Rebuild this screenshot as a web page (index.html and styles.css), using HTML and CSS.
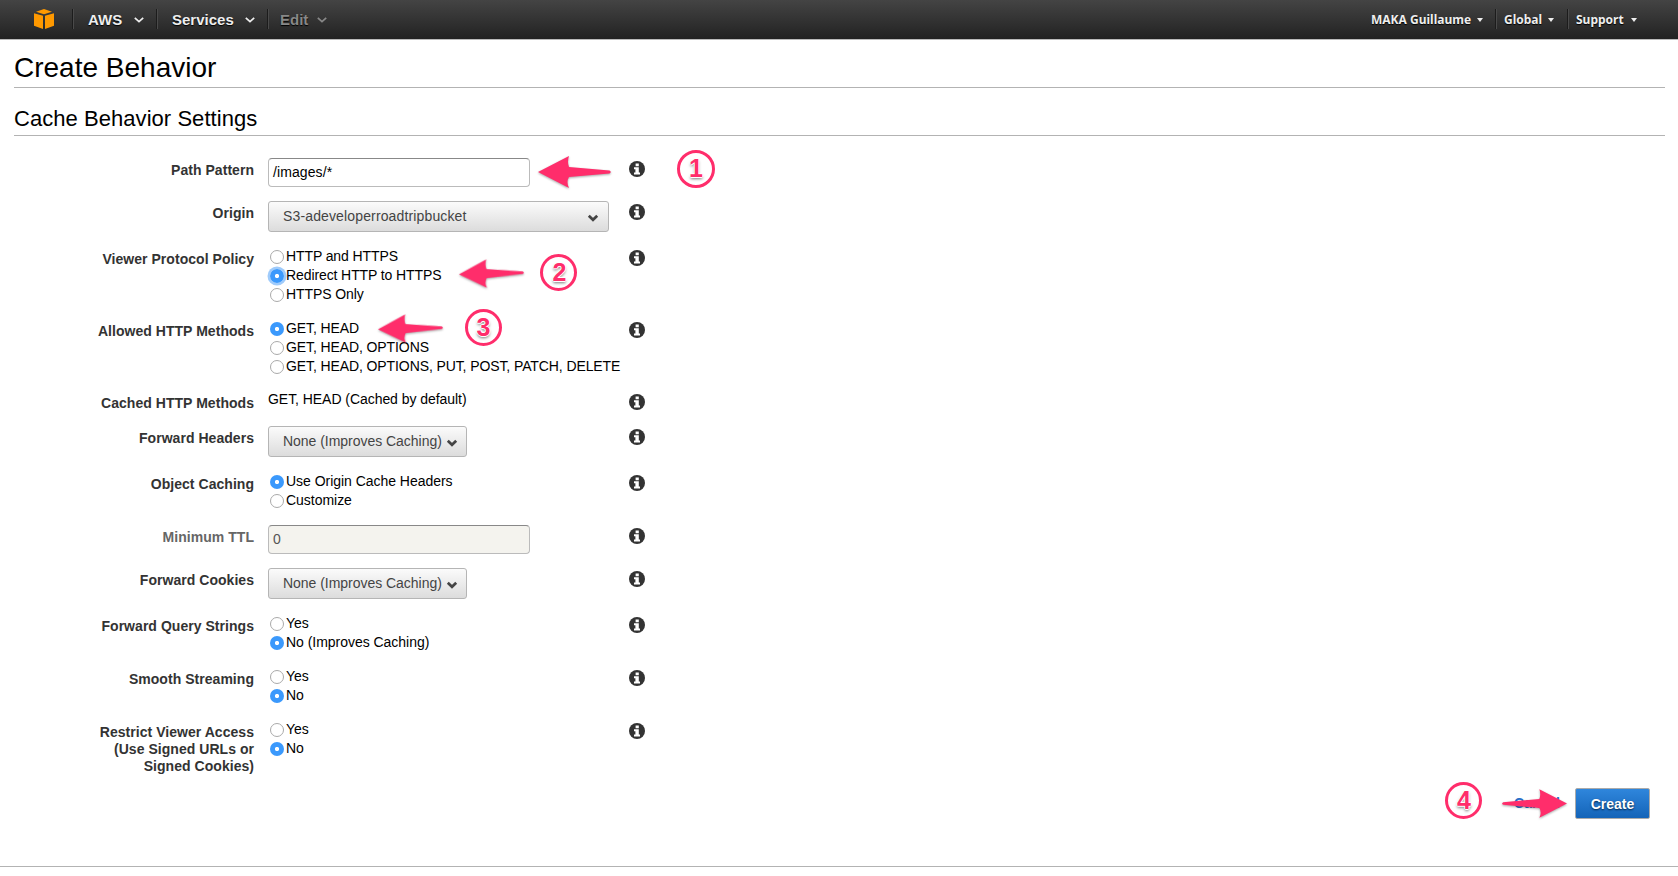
FILE: index.html
```html
<!DOCTYPE html>
<html lang="en">
<head>
<meta charset="utf-8">
<title>Create Behavior</title>
<link rel="stylesheet" href="styles.css">
</head>
<body>
<svg class="defs" width="0" height="0">
  <symbol id="info" viewBox="0 0 16 16"><circle cx="8" cy="8" r="8" fill="#333"/><path d="M6.600 2.400h3.200v2.800H6.600zM5 6.300h4.800v5.200H11v1.900H5v-1.900h1.400V8.200H5z" fill="#fff"/></symbol>
  <symbol id="chev" viewBox="0 0 12 8"><path d="M1.800 1.800 6 5.800l4.200-4" fill="none" stroke="#444" stroke-width="2.700"/></symbol>
  <symbol id="navchev" viewBox="0 0 10 6"><path d="M.8.8 5 4.700 9.200.8" fill="none" stroke="currentColor" stroke-width="1.700"/></symbol>
  <symbol id="arrow" viewBox="0 0 74 32"><path d="M0 16 31 0Q29 6 31 11L71.500 14.600Q74 16 71.500 17.500L31 21Q28 26 31 32Z" fill="#ff2d6b"/></symbol>
</svg>
<header class="nav">
  <svg class="logo" viewBox="0 0 20 20"><path d="M10 0 18 2.700 10 5.200 2 2.700zM0 4.200l9 2.600V20l-9-3.300zM20 4.200l-9 2.600V20l9-3.300z" fill="#f90"/></svg>
  <nav class="left">
    <a class="item aws"><span>AWS</span><svg><use href="#navchev"/></svg></a>
    <a class="item services"><span>Services</span><svg><use href="#navchev"/></svg></a>
    <a class="item edit"><span>Edit</span><svg><use href="#navchev"/></svg></a>
  </nav>
  <nav class="right">
    <a class="acct user"><span>MAKA Guillaume</span><i></i></a>
    <a class="acct global"><span>Global</span><i></i></a>
    <a class="acct support"><span>Support</span><i></i></a>
  </nav>
</header>
<main>
  <h1>Create Behavior</h1>
  <h2>Cache Behavior Settings</h2>
  <form class="form">
    <div class="row h43"><label>Path Pattern</label><div class="control"><div class="input">/images/*</div></div><svg class="info"><use href="#info"/></svg></div>
    <div class="row h46"><label>Origin</label><div class="control"><div class="select wide"><span class="origin">S3-adeveloperroadtripbucket</span><svg><use href="#chev"/></svg></div></div><svg class="info"><use href="#info"/></svg></div>
    <div class="row h72"><label>Viewer Protocol Policy</label><div class="control radios"><div><b></b><span>HTTP and HTTPS</span></div><div><b class="on focus"></b><span>Redirect HTTP to HTTPS</span></div><div><b></b><span>HTTPS Only</span></div></div><svg class="info"><use href="#info"/></svg></div>
    <div class="row h72"><label>Allowed HTTP Methods</label><div class="control radios"><div><b class="on"></b><span>GET, HEAD</span></div><div><b></b><span>GET, HEAD, OPTIONS</span></div><div><b></b><span>GET, HEAD, OPTIONS, PUT, POST, PATCH, DELETE</span></div></div><svg class="info"><use href="#info"/></svg></div>
    <div class="row h35"><label>Cached HTTP Methods</label><div class="control plain"><span>GET, HEAD (Cached by default)</span></div><svg class="info"><use href="#info"/></svg></div>
    <div class="row h46"><label>Forward Headers</label><div class="control"><div class="select"><span>None (Improves Caching)</span><svg><use href="#chev"/></svg></div></div><svg class="info"><use href="#info"/></svg></div>
    <div class="row h53"><label>Object Caching</label><div class="control radios"><div><b class="on"></b><span class="loose">Use Origin Cache Headers</span></div><div><b></b><span class="loose">Customize</span></div></div><svg class="info"><use href="#info"/></svg></div>
    <div class="row h43"><label class="muted">Minimum TTL</label><div class="control"><div class="input disabled">0</div></div><svg class="info"><use href="#info"/></svg></div>
    <div class="row h46"><label>Forward Cookies</label><div class="control"><div class="select"><span>None (Improves Caching)</span><svg><use href="#chev"/></svg></div></div><svg class="info"><use href="#info"/></svg></div>
    <div class="row h53"><label>Forward Query Strings</label><div class="control radios"><div><b></b><span class="loose">Yes</span></div><div><b class="on"></b><span class="loose">No (Improves Caching)</span></div></div><svg class="info"><use href="#info"/></svg></div>
    <div class="row h53"><label>Smooth Streaming</label><div class="control radios"><div><b></b><span class="loose">Yes</span></div><div><b class="on"></b><span class="loose">No</span></div></div><svg class="info"><use href="#info"/></svg></div>
    <div class="row last"><label>Restrict Viewer Access<br>(Use Signed URLs or<br>Signed Cookies)</label><div class="control radios"><div><b></b><span class="loose">Yes</span></div><div><b class="on"></b><span class="loose">No</span></div></div><svg class="info"><use href="#info"/></svg></div>
  </form>
  <div class="actions"><a class="cancel">Cancel</a><button class="create">Create</button></div>
</main>
<footer></footer>
<svg class="arrow a1"><use href="#arrow"/></svg>
<svg class="arrow a2"><use href="#arrow"/></svg>
<svg class="arrow a3"><use href="#arrow"/></svg>
<svg class="arrow a4"><use href="#arrow"/></svg>
<div class="step s1">1</div>
<div class="step s2">2</div>
<div class="step s3">3</div>
<div class="step s4">4</div>
</body>
</html>
```
FILE: styles.css
```css
* { box-sizing: border-box; }
body { margin: 0; height: 876px; overflow: hidden; position: relative; background: #fff; color: #000; font: 14px/19px "Liberation Sans", Arial, sans-serif; }
.defs { position: absolute; }
.nav { height: 40px; display: flex; align-items: flex-start; background: linear-gradient(#444, #222); border-bottom: 1px solid #bbb; color: #eee; }
.logo { width: 20px; height: 20px; margin: 9px 18px 0 34px; }
.left, .right { display: flex; margin-top: 9px; }
.right { margin-left: auto; margin-right: 40px; }
.item, .acct { display: flex; align-items: center; height: 20px; border-left: 1px solid #1c1c1c; box-shadow: inset 1px 0 #4a4a4a; font-weight: bold; text-shadow: 0 1px 1px #000; }
.item { font-size: 15px; padding-left: 15px; justify-content: space-between; }
.item svg { width: 10px; height: 6px; margin-top: 2px; }
.aws { width: 84px; padding-right: 12px; }
.services { width: 111px; padding-right: 12px; }
.edit { width: 72px; padding-left: 12px; padding-right: 12px; color: #888; }
.acct { font: bold 12px/20px "Noto Sans", "Open Sans", sans-serif; justify-content: space-between; }
.acct span { padding-top: 1px; }
.acct i { border: 3.5px solid transparent; border-top: 4px solid #eee; border-bottom: 0; margin-top: 1px; }
.user { border: 0; box-shadow: none; width: 124px; padding-right: 12px; }
.global { width: 72px; padding: 0 13px 0 8px; }
.support { width: 71px; padding: 0 1px 0 8px; }
h1, h2 { margin: 0 13px 0 14px; font-weight: normal; border-bottom: 1px solid #b3b3b3; }
h1 { font-size: 28px; line-height: 32px; height: 48px; padding-top: 12px; }
h2 { font-size: 22px; line-height: 26px; height: 48px; padding-top: 18px; letter-spacing: .05px; }
.form { padding-top: 22px; }
.row { display: flex; align-items: flex-start; padding-left: 54px; }
.row label { width: 200px; padding-top: 4px; text-align: right; font-weight: bold; line-height: 17px; color: #333; letter-spacing: .04px; }
.row label.muted { color: #666; }
.control { width: 375px; padding-left: 14px; }
.info { width: 16px; height: 16px; margin-top: 3px; }
.h35 { height: 35px; } .h43 { height: 43px; } .h46 { height: 46px; } .h53 { height: 53px; } .h72 { height: 72px; } .last { height: 68px; }
.input { width: 262px; height: 29px; border: 1px solid #bbb; border-top-color: #888; border-radius: 4px; padding: 0 4px; line-height: 27px; letter-spacing: .1px; }
.disabled { background: #f4f3ee; color: #555; }
.select { width: 199px; height: 31px; display: flex; justify-content: space-between; border: 1px solid #b5b5b5; border-radius: 3px; background: linear-gradient(#fbfbfb, #dcdcdc); padding: 0 8px 0 14px; color: #444; line-height: 28px; white-space: nowrap; }
.select.wide { width: 341px; padding-right: 9px; }
.select svg { width: 12px; height: 8px; margin-top: 12px; flex: none; }
.radios > div { height: 19px; display: flex; margin-left: 2px; white-space: nowrap; }
.radios b { width: 14px; height: 14px; margin: 3px 2px 0 0; border: 1px solid #aaa; border-radius: 50%; flex: none; }
.radios .on { border: 0; background: radial-gradient(circle, #fff 0 1.7px, #3b99fc 2.5px); }
.radios .focus { box-shadow: 0 0 0 2.5px #9fcbfb; }
.radios span, .plain span { letter-spacing: -.1px; }
.select span, .radios .loose { letter-spacing: -.03px; }
.select .origin { letter-spacing: .14px; }
.plain span { letter-spacing: -.05px; }
.plain { white-space: nowrap; line-height: 17px; }
.actions { display: flex; justify-content: flex-end; align-items: center; height: 31px; margin-right: 28px; font-weight: bold; }
.cancel { color: #2a6fc9; margin-right: 15px; }
.create { width: 75px; height: 31px; border: 1px solid #aaa; border-radius: 2px; color: #fff; background: linear-gradient(#2f86dc, #1464b8); font: bold 14px "Liberation Sans", sans-serif; text-shadow: 0 1px 2px #024; padding: 0; }
footer { margin-top: 47px; border-top: 1px solid #b3b3b3; }
.arrow { position: absolute; filter: drop-shadow(0 1px 1px rgba(0,0,0,.35)); }
.a1 { left: 538px; top: 156px; width: 74px; height: 32px; }
.a2 { left: 459px; top: 259px; width: 66px; height: 29px; transform: rotate(-1.5deg); }
.a3 { left: 378px; top: 314px; width: 66px; height: 29px; transform: rotate(-1.5deg); }
.a4 { left: 1501px; top: 789px; width: 66px; height: 29px; transform: scaleX(-1); }
.step { position: absolute; width: 37px; height: 37px; border: 3px solid #ff2d6b; border-radius: 50%; color: #ff2d6b; font: bold 25px/30px "Liberation Sans", sans-serif; text-align: center; text-shadow: -1px 0 #fff, 1px 0 #fff, 0 -1px #fff, 0 1px #fff, 0 2px 3px #777; }
.s1 { left: 677px; top: 150px; width: 38px; height: 38px; line-height: 31px; }
.s2 { left: 540px; top: 254px; padding-left: 2px; }
.s3 { left: 465px; top: 309px; }
.s4 { left: 1445px; top: 782px; padding-left: 1px; }
```
